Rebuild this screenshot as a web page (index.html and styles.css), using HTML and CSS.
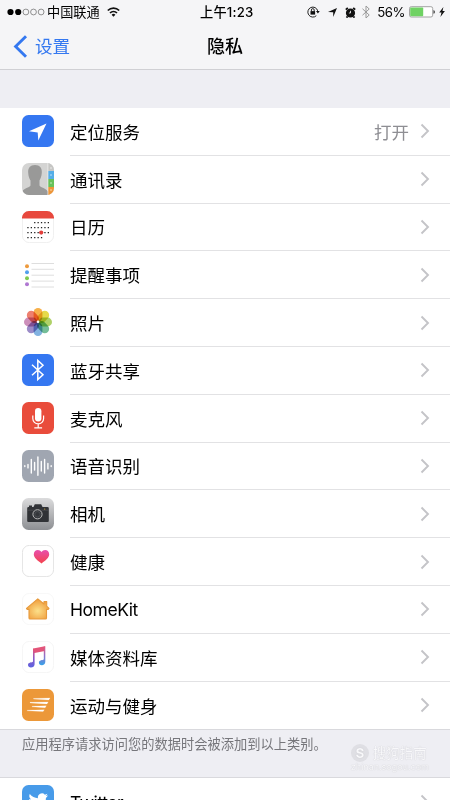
FILE: index.html
```
<!DOCTYPE html>
<html lang="zh-CN">
<head>
    <meta charset="UTF-8">
    <meta name="viewport" content="width=device-width, initial-scale=1.0">
    <title>隐私</title>
    <link rel="stylesheet" href="styles.css">
</head>
<body>
<!-- shared shapes -->
<svg class="defs" width="0" height="0">
    <defs>
        <symbol id="chevron" viewBox="0 0 10 16"><path d="M1.5 1.5 8 8l-6.5 6.5" fill="none" stroke="#c4c4c8" stroke-width="1.9"/></symbol>
        <linearGradient id="gray" x1="0" y1="0" x2="0" y2="1"><stop offset="0" stop-color="#dcdcdd"/><stop offset="1" stop-color="#8d8f93"/></linearGradient>
        <linearGradient id="heart" x1="0" y1="0" x2="0" y2="1"><stop offset="0" stop-color="#e84fae"/><stop offset="1" stop-color="#f4434b"/></linearGradient>
        <linearGradient id="note" x1="0" y1="0" x2="0" y2="1"><stop offset="0" stop-color="#f0506e"/><stop offset=".5" stop-color="#8e5bc8"/><stop offset="1" stop-color="#5b62e0"/></linearGradient>
        <linearGradient id="note2" x1="0" y1="0" x2="0" y2="1"><stop offset="0" stop-color="#ec5578"/><stop offset=".5" stop-color="#8f70c8"/><stop offset="1" stop-color="#36a3ea"/></linearGradient>
        <radialGradient id="house" cx=".5" cy=".6" r=".55"><stop offset="0" stop-color="#fce08a"/><stop offset="1" stop-color="#f0a040"/></radialGradient>
        <clipPath id="round"><rect width="32" height="32" rx="7"/></clipPath>
    </defs>
</svg>

<div class="statusbar">
    <svg class="signal" width="38" height="8" viewBox="0 0 38 8">
        <g fill="#000"><circle cx="3.5" cy="4" r="3.1"/><circle cx="11.2" cy="4" r="3.1"/></g>
        <g fill="none" stroke="#666" stroke-width=".7"><circle cx="18.9" cy="4" r="2.9"/><circle cx="26.5" cy="4" r="2.9"/><circle cx="34.1" cy="4" r="2.9"/></g>
    </svg>
    <span class="carrier">中国联通</span>
    <svg class="wifi" width="13" height="10" viewBox="0 0 13 10">
        <g fill="none" stroke="#111" stroke-width="1.7"><path d="M.8 3.5a8.1 8.1 0 0 1 11.4 0M3 6a5 5 0 0 1 7 0"/></g>
        <path d="M6.5 9.8 4.6 7.7a2.8 2.8 0 0 1 3.8 0z" fill="#111"/>
    </svg>
    <span class="time">上午1:23</span>
    <div class="status-right">
        <svg width="13" height="12" viewBox="0 0 13 12">
            <path d="M9.3 9.7a5 5 0 1 1 1.4-4.8" fill="none" stroke="#222" stroke-width="1"/>
            <path d="M9 5h3.7l-1.8 2.6z" fill="#111"/>
            <rect x="3.5" y="5.1" width="4.6" height="3.5" fill="#111"/>
            <path d="M4.4 5.2V4a1.4 1.4 0 0 1 2.800 0v1.2" fill="none" stroke="#111" stroke-width=".9"/>
        </svg>
        <svg class="nav-arrow" width="9" height="9" viewBox="0 0 9 9"><path d="M9 0 5.2 9V4.3L0 3.9z" fill="#111"/></svg>
        <svg class="alarm" width="11" height="11" viewBox="0 0 11 11">
            <circle cx="5.5" cy="6" r="4.6" fill="#111"/>
            <path d="M.8 2.600 2.800 .9M10.2 2.600 8.200 .9M2.5 9.5l-1 1.2M8.5 9.5l1 1.2" stroke="#111" stroke-width="1.8"/>
            <path d="M5.5 3.8V6H3.900" fill="none" stroke="#fff" stroke-width=".8"/>
        </svg>
        <svg class="bt" width="8" height="14" viewBox="0 0 8 14"><path d="M.5 3.8 7.2 10 4 13V1l3.2 3L.5 10.2" fill="none" stroke="#999" stroke-width="1"/></svg>
        <span class="percent">56%</span>
        <svg width="26" height="12" viewBox="0 0 26 12">
            <rect x=".5" y=".7" width="23.2" height="10.3" rx="1.8" fill="#fff" stroke="#999" stroke-width=".9"/>
            <rect x="1.2" y="1.4" width="13" height="8.9" rx=".8" fill="#6fd263"/>
            <path d="M24.5 4a2 2 0 0 1 0 3.8z" fill="#333"/>
        </svg>
        <svg class="bolt" width="6" height="10" viewBox="0 0 6 10"><path d="M4.4 0 .2 5.6h2.3L1.4 10 5.9 4.1H3.5z" fill="#111"/></svg>
    </div>
</div>

<div class="navbar">
    <a class="back" href="#">
        <svg width="15" height="23" viewBox="0 0 15 23"><path d="M13 1.2 2.6 11.5 13 21.8" fill="none" stroke="#3478f0" stroke-width="2.9"/></svg>
        设置
    </a>
    <h1>隐私</h1>
</div>

<div class="list">
    <a class="row" href="#">
        <svg class="icon" viewBox="0 0 32 32"><rect width="32" height="32" rx="6.5" fill="#3577f1"/><path d="M24.500 8.500 16.300 25.500 15.700 17.500 7 16.200z" fill="#fff"/></svg>
        <span class="label">定位服务<span class="value">打开</span><svg class="chevron"><use href="#chevron"/></svg></span>
    </a>
    <a class="row" href="#">
        <svg class="icon" viewBox="0 0 32 32">
            <g clip-path="url(#round)">
                <rect width="32" height="32" fill="#d4d4d3"/>
                <rect x="26" width="6" height="9" fill="#c6c6c4"/><rect x="26" y="8" width="6" height="8" fill="#55aee8"/><rect x="26" y="16" width="6" height="8" fill="#68c25a"/><rect x="26" y="24" width="6" height="8" fill="#ee9638"/>
                <path d="M25.9 0v32" stroke="#eee" stroke-width=".8"/>
                <path d="M28 5h2M28 12h2M28 20h2M28 27h2" stroke="#fff" stroke-opacity=".6"/>
                <path d="M13 2c4.800 0 7.200 2.800 6.800 7.800-.2 4-1.300 5.700-2.300 7.700v5c1 2.300 7 2.500 8 6V32H.5v-3.500c1-3.500 7-3.700 8-6v-5c-1.200-2-2.100-3.700-2.300-7.700C5.800 4.800 8.200 2 13 2z" fill="#999998"/>
            </g>
        </svg>
        <span class="label">通讯录<svg class="chevron"><use href="#chevron"/></svg></span>
    </a>
    <a class="row" href="#">
        <svg class="icon" viewBox="0 0 32 32">
            <rect x=".4" y=".4" width="31.200" height="31.200" rx="7" fill="#fff" stroke="#e8e8e8" stroke-width=".7"/>
            <path d="M0 7.500A7 7 0 0 1 7 0h18a7 7 0 0 1 7 7.500z" fill="#e8483d"/>
            <g stroke="#222" stroke-width="1.300" stroke-dasharray="1.300 2.100"><path d="M12.100 11.600h15M5.300 16.700h22M5.300 21.600h22M5.300 26.600h15"/></g>
            <circle cx="19.200" cy="21.600" r="2.100" fill="#e23c39"/>
        </svg>
        <span class="label">日历<svg class="chevron"><use href="#chevron"/></svg></span>
    </a>
    <a class="row" href="#">
        <svg class="icon" viewBox="0 0 32 32">
            <path d="M9.500 4.500H32M9.500 10.300H32M9.500 16.200H32M9.500 22.100H32M9.500 28H32" stroke="#d6d6d6" stroke-width=".8"/>
            <circle cx="5" cy="7.200" r="2" fill="#ee9b3e"/><circle cx="5" cy="13.300" r="2" fill="#52a0ee"/><circle cx="5" cy="19.300" r="2" fill="#7fca50"/><circle cx="5" cy="25.300" r="2" fill="#b078d2"/>
        </svg>
        <span class="label">提醒事项<svg class="chevron"><use href="#chevron"/></svg></span>
    </a>
    <a class="row" href="#">
        <svg class="icon petals" viewBox="0 0 32 32">
            <rect x="11.600" y="2" width="8.800" height="13.500" rx="4.400" fill="#f7b04a"/>
            <rect x="11.600" y="2" width="8.800" height="13.500" rx="4.400" fill="#e6da4a" transform="rotate(45 16 16)"/>
            <rect x="11.600" y="2" width="8.800" height="13.500" rx="4.400" fill="#afd168" transform="rotate(90 16 16)"/>
            <rect x="11.600" y="2" width="8.800" height="13.500" rx="4.400" fill="#74bd98" transform="rotate(135 16 16)"/>
            <rect x="11.600" y="2" width="8.800" height="13.500" rx="4.400" fill="#82b2e0" transform="rotate(180 16 16)"/>
            <rect x="11.600" y="2" width="8.800" height="13.500" rx="4.400" fill="#9c8cc8" transform="rotate(225 16 16)"/>
            <rect x="11.600" y="2" width="8.800" height="13.500" rx="4.400" fill="#cc8fba" transform="rotate(270 16 16)"/>
            <rect x="11.600" y="2" width="8.800" height="13.500" rx="4.400" fill="#ee8070" transform="rotate(315 16 16)"/>
            <circle class="core" cx="16" cy="15.800" r="1.300" fill="#fff"/>
        </svg>
        <span class="label">照片<svg class="chevron"><use href="#chevron"/></svg></span>
    </a>
    <a class="row" href="#">
        <svg class="icon" viewBox="0 0 32 32"><rect width="32" height="32" rx="6.500" fill="#3577f1"/><path d="M10 10.800 21 20.800 15.800 25.600V6.400L21 11.200 10 21.200" fill="none" stroke="#fff" stroke-width="1.500"/></svg>
        <span class="label">蓝牙共享<svg class="chevron"><use href="#chevron"/></svg></span>
    </a>
    <a class="row" href="#">
        <svg class="icon" viewBox="0 0 32 32">
            <rect width="32" height="32" rx="6.500" fill="#e94c3b"/>
            <rect x="13" y="6" width="6.400" height="13.500" rx="3.200" fill="#fff"/>
            <path d="M10.800 13.500v3a5.400 5.400 0 0 0 10.800 0v-3M16.200 22v3.600M12.300 25.800h7.800" fill="none" stroke="#fff" stroke-width="1.200"/>
        </svg>
        <span class="label">麦克风<svg class="chevron"><use href="#chevron"/></svg></span>
    </a>
    <a class="row" href="#">
        <svg class="icon" viewBox="0 0 32 32">
            <rect width="32" height="32" rx="6.500" fill="#a0a6b1"/>
            <path d="M2.800 15.700v.8M6 14.500v3.400M9.300 9.500v13.500M12.600 12.500v7.500M15.900 7v18.200M19.300 11.500v9.500M22.600 9.500v13.500M25.900 13.500v5.400M29.200 15.700v.8" stroke="#fff" stroke-width="1.400" stroke-linecap="round"/>
        </svg>
        <span class="label">语音识别<svg class="chevron"><use href="#chevron"/></svg></span>
    </a>
    <a class="row" href="#">
        <svg class="icon" viewBox="0 0 32 32">
            <rect width="32" height="32" rx="6.500" fill="url(#gray)"/>
            <path d="M7 7.500h3V9h1.500l1.300-2.700h6.400L20.500 9H25.500a1.300 1.300 0 0 1 1.300 1.300V22.500A1.300 1.300 0 0 1 25.500 24h-19A1.300 1.300 0 0 1 5.200 22.500V10.300A1.300 1.300 0 0 1 6.500 9H7z" fill="#303236"/>
            <path d="M5.200 12.200h21.600" stroke="#55575a" stroke-width=".6"/>
            <circle cx="15.500" cy="16.300" r="5.400" fill="#303236"/>
            <circle cx="15.500" cy="16.300" r="4.600" fill="#34363a" stroke="#b9b9b9" stroke-width="1"/>
            <circle cx="15.500" cy="16.300" r="2.700" fill="none" stroke="#505358" stroke-width=".8"/>
            <circle cx="22.700" cy="11" r=".6" fill="#e0b13b"/>
        </svg>
        <span class="label">相机<svg class="chevron"><use href="#chevron"/></svg></span>
    </a>
    <a class="row" href="#">
        <svg class="icon" viewBox="0 0 32 32">
            <rect x=".4" y=".4" width="31.200" height="31.200" rx="7" fill="#fff" stroke="#dcdcdc" stroke-width=".8"/>
            <path d="M19.500 18.500C15.500 15.500 11.800 12.800 11.800 9.300c0-4.800 5.600-5.800 7.700-2.300 2.100-3.500 7.700-2.500 7.700 2.300 0 3.500-3.700 6.200-7.700 9.200z" fill="url(#heart)"/>
        </svg>
        <span class="label">健康<svg class="chevron"><use href="#chevron"/></svg></span>
    </a>
    <a class="row" href="#">
        <svg class="icon" viewBox="0 0 32 32">
            <rect x=".4" y=".4" width="31.200" height="31.200" rx="7" fill="#fff" stroke="#f3f3f3" stroke-width=".7"/>
            <path d="M15.800 5.800 22 11V8.500h2.700v4.700l2.300 2.200-.8 1H24.500V25a1 1 0 0 1-1 1h-15.500a1 1 0 0 1-1-1V16.400H5.200l-.7-1z" fill="url(#house)" stroke="#e79a3c" stroke-width="1.100" stroke-linejoin="round"/>
        </svg>
        <span class="label"><span class="latin">HomeKit</span><svg class="chevron"><use href="#chevron"/></svg></span>
    </a>
    <a class="row" href="#">
        <svg class="icon" viewBox="0 0 32 32">
            <rect x=".4" y=".4" width="31.200" height="31.200" rx="7" fill="#fff" stroke="#f0f0f0" stroke-width=".7"/>
            <path d="M11.200 7.500 22.800 5.200V10L11.200 12.200z" fill="#e35579"/>
            <path d="M12.600 8v15.200c0 2-1.700 3.300-3.700 3.300-1.700 0-2.900-1-2.900-2.400 0-3 4.200-2.200 5-3.500V7.500z" fill="url(#note)"/>
            <path d="M23.300 5.200v15.600c0 2-1.600 3.400-3.500 3.400-1.700 0-2.900-1-2.900-2.400 0-3 4.100-2.200 4.900-3.500V5.500z" fill="url(#note2)"/>
        </svg>
        <span class="label">媒体资料库<svg class="chevron"><use href="#chevron"/></svg></span>
    </a>
    <a class="row" href="#">
        <svg class="icon" viewBox="0 0 32 32">
            <rect width="32" height="32" rx="6.500" fill="#ec9839"/>
            <path d="M11.500 9.500 28 9 26.800 11 11.500 10.100zM8 13.300 26.200 12.900 25 14.900 8 13.900zM10 17.200 24.300 16.800 23.100 18.800 10 17.800zM5.200 21.200 22.300 20.800 21.100 22.600 5.200 21.800z" fill="#fff" stroke="#fff" stroke-width=".2"/>
        </svg>
        <span class="label">运动与健身<svg class="chevron"><use href="#chevron"/></svg></span>
    </a>
</div>

<div class="footer">
    <p>应用程序请求访问您的数据时会被添加到以上类别。</p>
    <div class="watermark">
        <div class="brand"><span class="badge">S</span>搜狗指南</div>
        <div class="site">zhinan.sogou.com</div>
    </div>
</div>

<div class="list">
    <a class="row" href="#">
        <svg class="icon" viewBox="0 0 32 32">
            <rect width="32" height="32" rx="6.500" fill="#489be9"/>
            <path d="M26 10.300c-.8.400-1.500.5-2.300.6.800-.5 1.400-1.200 1.700-2.200-.8.500-1.600.8-2.500 1a4 4 0 0 0-6.900 3.600c-3.300-.1-6.200-1.700-8.200-4.200-1 1.900-.5 4 1.200 5.300-.6 0-1.200-.2-1.800-.5 0 2 1.300 3.600 3.200 4-.6.200-1.200.2-1.800.1.600 1.600 2 2.700 3.700 2.700A8 8 0 0 1 6.400 22.500C15 27.500 24 22 23.900 12.900c.8-.7 1.600-1.600 2.100-2.600z" fill="#fff"/>
        </svg>
        <span class="label"><span class="latin">Twitter</span><svg class="chevron"><use href="#chevron"/></svg></span>
    </a>
</div>
</body>
</html>
```

FILE: styles.css
```
* { box-sizing: border-box; }
body {
  margin: 0;
  width: 450px;
  height: 800px;
  overflow: hidden;
  background-color: #eeeef3;
  color: #000;
  font-family: Inter, "Noto Sans CJK SC", sans-serif;
}
a { color: inherit; text-decoration: none; }
svg { display: block; flex: none; }
.defs { position: absolute; }

/* Status bar */
.statusbar {
  display: grid;
  grid-template-columns: 38px 62px 93px auto 1fr;
  align-items: center;
  height: 24px;
  padding: 0 5px 0 7px;
  background-color: #f5f5f7;
  font-size: 13.2px;
  line-height: 24px;
}
.carrier { padding-left: 2px; }
.time { font-weight: 500; letter-spacing: .2px; }
.status-right { display: flex; align-items: center; justify-content: flex-end; }
.nav-arrow { margin-left: 8px; }
.alarm { margin-left: 8px; }
.bt { margin-left: 6px; }
.percent { margin: 0 4px 0 7px; letter-spacing: -.5px; }
.bolt { margin-left: 4px; }

/* Title bar */
.navbar {
  display: grid;
  grid-template-columns: 1fr auto 1fr;
  align-items: center;
  height: 46px;
  border-bottom: 1px solid #d0d0d4;
  background-color: #f5f5f7;
}
.navbar h1 { margin: 0; font-size: 18px; font-weight: 500; line-height: 44px; }
.back {
  display: flex;
  align-items: center;
  gap: 7px;
  padding-left: 13px;
  color: #3478f0;
  font-size: 17.6px;
  line-height: 44px;
}

/* Rows */
.list { background-color: #fff; }
.navbar + .list { margin-top: 38px; }
.row { display: flex; height: 47.8px; padding-left: 22px; }
.icon { width: 32px; height: 32px; margin: 7.3px 16px 0 0; }
.label {
  display: flex;
  flex: 1;
  align-items: center;
  padding: 0 20px 0 0;
  border-bottom: 1px solid #e2e2e4;
  font-size: 17.5px;
}
.row:last-child .label { border-bottom: none; }
.latin { letter-spacing: -.45px; padding-top: 1px; }
.chevron { width: 10px; height: 16px; margin: 0 0 0 auto; }
.value { margin-left: auto; color: #8e8e93; }
.value + .chevron { margin-left: 11px; }
.petals rect { mix-blend-mode: multiply; }

/* Group footer */
.footer {
  display: flex;
  justify-content: space-between;
  height: 48.6px;
  padding: 0 21px 0 22px;
  border-top: 1px solid #d9d9dd;
  border-bottom: 1px solid #d9d9dd;
}
.footer p { margin: 4px 0 0; color: #76767b; font-size: 13.25px; line-height: 20px; white-space: nowrap; }
.watermark { margin-top: 14px; color: #f8f8fa; text-shadow: 0 0 1px #b8b8be; white-space: nowrap; }
.brand { display: flex; align-items: center; gap: 4px; font-size: 13.5px; line-height: 18px; }
.badge { width: 18px; height: 18px; border-radius: 50%; background-color: #dfdfe4; text-align: center; font-weight: 700; }
.site { font-size: 9px; line-height: 10px; text-align: center; }
```
